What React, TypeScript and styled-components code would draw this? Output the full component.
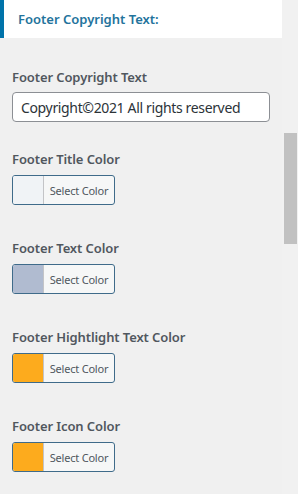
import { createGlobalStyle, styled } from "styled-components";

const GlobalStyle = createGlobalStyle`
    html, body {
        margin: 0;
        padding: 0;
        background: #f0f0f0;
    }
    body {
        font-family: "Noto Sans", "Open Sans", sans-serif;
        color: #50575e;
    }
`;

const Root = styled.div`
    width: 298px;
    height: 494px;
    display: flex;
    flex-direction: column;
    overflow: hidden;
    background: #f0f0f0;
`;

const Main = styled.div`
    flex: 0 0 490px;
    display: flex;
    flex-direction: row;
`;

const Panel = styled.div`
    width: 282px;
    display: flex;
    flex-direction: column;
`;

const Header = styled.div`
    height: 38px;
    box-sizing: border-box;
    background: #fff;
    border-left: 4px solid #0073aa;
    padding-left: 14px;
    display: flex;
    align-items: center;
`;

const HeaderTitle = styled.h3`
    margin: 0;
    font-size: 13px;
    font-weight: 600;
    color: #23739c;
`;

const Content = styled.div`
    padding: 30px 12px 0 12px;
    display: flex;
    flex-direction: column;
`;

const Field = styled.div<{ $after: number }>`
    display: flex;
    flex-direction: column;
    align-items: flex-start;
    margin-bottom: ${(p) => p.$after}px;
`;

const Label = styled.label`
    display: block;
    font-size: 13px;
    line-height: 18px;
    font-weight: 600;
    color: #50575e;
    letter-spacing: -0.1px;
    margin-bottom: 6px;
`;

const TextInput = styled.input`
    box-sizing: border-box;
    width: 258px;
    height: 30px;
    padding: 0 8px;
    border: 1px solid #8c8f94;
    border-radius: 4px;
    background: #fff;
    font-family: "Noto Sans", "Open Sans", sans-serif;
    font-size: 14px;
    letter-spacing: -0.35px;
    color: #2c3338;
    outline: none;
`;

const ColorButton = styled.button`
    box-sizing: border-box;
    width: 103px;
    height: 30px;
    margin-top: 1px;
    padding: 0;
    display: flex;
    align-items: stretch;
    border: 1px solid #3f6b8a;
    border-radius: 3px;
    background: #f6f7f7;
    overflow: hidden;
    cursor: pointer;
`;

const Swatch = styled.span<{ $color: string }>`
    width: 30px;
    flex: 0 0 30px;
    background: ${(p) => p.$color};
    border-right: 1px solid #c3c4c7;
`;

const ButtonText = styled.span`
    flex: 1;
    display: flex;
    align-items: center;
    justify-content: center;
    font-family: "Noto Sans", "Open Sans", sans-serif;
    font-size: 11px;
    color: #50575e;
    letter-spacing: -0.2px;
`;

const Scrollbar = styled.div`
    width: 16px;
    display: flex;
    flex-direction: column;
    align-items: flex-end;
    background: #f1f1f1;
`;

const Thumb = styled.div`
    width: 13px;
    height: 111px;
    margin-top: 133px;
    margin-right: 1px;
    background: #c1c1c1;
`;

const ArrowDown = styled.div`
    margin-top: auto;
    margin-bottom: 5px;
    margin-right: 3px;
    width: 0;
    height: 0;
    border-left: 4px solid transparent;
    border-right: 4px solid transparent;
    border-top: 4px solid #505050;
`;

const BottomEdge = styled.div`
    flex: 1;
    border-top: 1px solid #dcdcdc;
    background: #f5f5f5;
`;

const colors = [
    { label: "Footer Title Color", color: "#f0f3f6" },
    { label: "Footer Text Color", color: "#b0bbd0" },
    { label: "Footer Hightlight Text Color", color: "#fdab1d" },
    { label: "Footer Icon Color", color: "#fdab1d" },
];

export default function App() {
    return <>
        <GlobalStyle />
        <Root>
            <Main>
                <Panel>
                    <Header>
                        <HeaderTitle>Footer Copyright Text:</HeaderTitle>
                    </Header>
                    <Content>
                        <Field $after={28}>
                            <Label>Footer Copyright Text</Label>
                            <TextInput defaultValue="Copyright©2021 All rights reserved" />
                        </Field>
                        {colors.map((c) => <Field key={c.label} $after={34}>
                            <Label>{c.label}</Label>
                            <ColorButton>
                                <Swatch $color={c.color} />
                                <ButtonText>Select Color</ButtonText>
                            </ColorButton>
                        </Field>)}
                    </Content>
                </Panel>
                <Scrollbar>
                    <Thumb />
                    <ArrowDown />
                </Scrollbar>
            </Main>
            <BottomEdge />
        </Root>
    </>;
}
